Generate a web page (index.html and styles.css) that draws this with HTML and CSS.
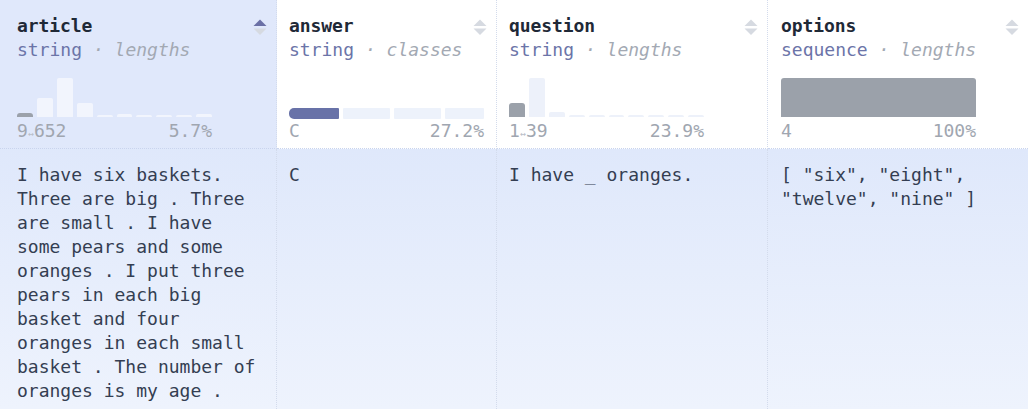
FILE: index.html
```html
<!DOCTYPE html>
<html>
<head>
<meta charset="utf-8">
<link rel="stylesheet" href="styles.css">
</head>
<body>
<div class="table">
  <div class="head sel">
    <div class="title-row"><span class="name">article</span>
      <svg class="sort" width="14" height="17" viewBox="0 0 14 17"><polygon class="up on" points="0.5,7 7,0.5 13.5,7"/><polygon class="down" points="0.5,9.5 13.5,9.5 7,16"/></svg>
    </div>
    <div class="type"><span class="dtype">string</span> <span class="kind">· lengths</span></div>
    <div class="hist">
      <div class="bar dark" style="height:4px"></div>
      <div class="bar" style="height:19px"></div>
      <div class="bar" style="height:39px"></div>
      <div class="bar" style="height:14px"></div>
      <div class="bar" style="height:2px"></div>
      <div class="bar" style="height:3px"></div>
      <div class="bar" style="height:2px"></div>
      <div class="bar" style="height:2px"></div>
      <div class="bar" style="height:2px"></div>
      <div class="bar" style="height:3px"></div>
    </div>
    <div class="labels"><span>9<span class="arr">↔</span>652</span><span>5.7%</span></div>
  </div>
  <div class="head">
    <div class="title-row"><span class="name">answer</span>
      <svg class="sort" width="14" height="17" viewBox="0 0 14 17"><polygon class="up" points="0.5,7 7,0.5 13.5,7"/><polygon class="down" points="0.5,9.5 13.5,9.5 7,16"/></svg>
    </div>
    <div class="type"><span class="dtype">string</span> <span class="kind">· classes</span></div>
    <div class="hist classes">
      <div class="cls on" style="width:50px"></div>
      <div class="cls" style="width:47px"></div>
      <div class="cls" style="width:47px"></div>
      <div class="cls" style="width:39px"></div>
    </div>
    <div class="labels"><span>C</span><span>27.2%</span></div>
  </div>
  <div class="head">
    <div class="title-row"><span class="name">question</span>
      <svg class="sort" width="14" height="17" viewBox="0 0 14 17"><polygon class="up" points="0.5,7 7,0.5 13.5,7"/><polygon class="down" points="0.5,9.5 13.5,9.5 7,16"/></svg>
    </div>
    <div class="type"><span class="dtype">string</span> <span class="kind">· lengths</span></div>
    <div class="hist">
      <div class="bar dark" style="height:14px"></div>
      <div class="bar" style="height:39px"></div>
      <div class="bar" style="height:5px"></div>
      <div class="bar" style="height:2px"></div>
      <div class="bar" style="height:2px"></div>
      <div class="bar" style="height:2px"></div>
      <div class="bar" style="height:2px"></div>
      <div class="bar" style="height:2px"></div>
      <div class="bar" style="height:2px"></div>
      <div class="bar" style="height:2px"></div>
    </div>
    <div class="labels"><span>1<span class="arr">↔</span>39</span><span>23.9%</span></div>
  </div>
  <div class="head last">
    <div class="title-row"><span class="name">options</span>
      <svg class="sort" width="14" height="17" viewBox="0 0 14 17"><polygon class="up" points="0.5,7 7,0.5 13.5,7"/><polygon class="down" points="0.5,9.5 13.5,9.5 7,16"/></svg>
    </div>
    <div class="type"><span class="dtype">sequence</span> <span class="kind">· lengths</span></div>
    <div class="hist">
      <div class="bar dark full" style="height:39px"></div>
    </div>
    <div class="labels"><span>4</span><span>100%</span></div>
  </div>

  <div class="cell first">I have six baskets. Three are big . Three are small . I have some pears and some oranges . I put three pears in each big basket and four oranges in each small basket . The number of oranges is my age .</div>
  <div class="cell">C</div>
  <div class="cell">I have _ oranges.</div>
  <div class="cell last">[ "six", "eight", "twelve", "nine" ]</div>
</div>
</body>
</html>
```

FILE: styles.css
```css
html, body {
  margin: 0;
  padding: 0;
  background: #ffffff;
}
body {
  width: 1028px;
  height: 409px;
  overflow: hidden;
  font-family: "DejaVu Sans Mono", "Liberation Mono", monospace;
  font-size: 18px;
  line-height: 24px;
}
.table {
  display: grid;
  grid-template-columns: 277px 220px 271px 260px;
  grid-template-rows: 149px 260px;
}
.head {
  border-right: 1px dotted #d3dbec;
  border-bottom: 1px dotted #c9d4ee;
  padding: 14px 9px 0 12px;
  display: flex;
  flex-direction: column;
  background: #ffffff;
}
.head.sel {
  background: #e0e8fb;
  padding-left: 17px;
}
.head.last, .cell.last {
  border-right: none;
  padding-left: 13px;
}
.title-row {
  display: flex;
  justify-content: space-between;
  align-items: flex-start;
}
.name {
  font-weight: bold;
  color: #1f2937;
  letter-spacing: -0.1px;
}
.sort {
  margin-top: 5px;
}
.sort polygon {
  fill: #d6dae1;
}
.sort polygon.on {
  fill: #6b70a6;
}
.type {
  color: #9ca3af;
}
.dtype {
  color: #6b74a8;
}
.kind {
  font-style: italic;
  color: #a3a9b3;
}
.hist {
  margin-top: 15px;
  width: 195px;
  height: 40px;
  display: flex;
  align-items: flex-end;
  gap: 4px;
}
.bar {
  width: 16px;
  background: #f2f5fd;
  border-radius: 2px 2px 0 0;
}
.head:not(.sel) .bar {
  background: #edf1fa;
}
.bar.dark, .head:not(.sel) .bar.dark {
  background: #9ba1aa;
  border-radius: 3px 3px 0 0;
}
.bar.full {
  width: 195px;
}
.hist.classes {
  align-items: flex-end;
  padding-bottom: 0;
  height: 42px;
  margin-bottom: -2px;
}
.cls {
  height: 11px;
  background: #edf2fb;
  border-radius: 1px;
}
.cls.on {
  background: #6872a8;
  border-radius: 5px 1px 1px 5px;
}
.labels {
  margin-top: 2px;
  width: 195px;
  display: flex;
  justify-content: space-between;
  color: #a0a6b0;
}
.arr {
  font-size: 10px;
  color: #b8bec8;
}
.cell {
  border-right: 1px dotted #d3dbec;
  padding: 14px 12px 0 12px;
  color: #343e52;
  background: linear-gradient(#dfe8fb, #eef3fd);
  overflow: hidden;
}
.cell.first {
  padding-left: 17px;
}
```
